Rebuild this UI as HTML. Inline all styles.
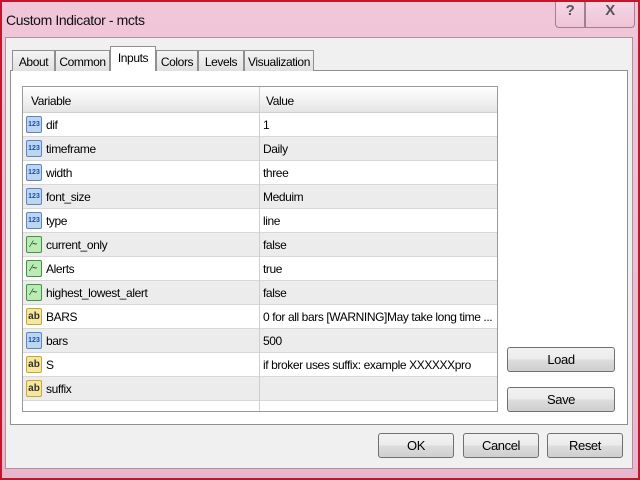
<!DOCTYPE html>
<html><head><style>
*{margin:0;padding:0;box-sizing:border-box}
body{width:640px;height:480px;overflow:hidden;background:#e8b4cc;font-family:"Liberation Sans",sans-serif;font-size:12px;letter-spacing:-0.4px;color:#000;position:relative}
.win{position:absolute;left:0;top:0;width:640px;height:480px;border:2px solid #c0182a;background:linear-gradient(#f0c6d8,#e9b7cd)}
.title{position:absolute;left:4px;top:10px;font-size:14px;color:#111}
.cap{position:absolute;top:0;height:26px;border:1px solid #a08090;border-top:none;background:linear-gradient(#f6d6e4,#eec4d6);text-align:center;font-size:15px;font-weight:bold;color:#555}
.client{position:absolute;left:5px;top:37px;width:628px;height:432px;background:#f0f0f0;border:1px solid #b090a0}
.panel{position:absolute;left:10px;top:70px;width:618px;height:355px;background:#fff;border:1px solid #8e8f8f}
.tab{position:absolute;top:50px;height:21px;border:1px solid #8e8f8f;border-bottom:none;background:linear-gradient(#f4f4f4,#e1e1e1);padding-top:4px;text-align:center;font-size:12px}
.tab.sel{top:46px;height:25px;background:#fff;padding-top:4px}
.grid{position:absolute;left:22px;top:86px;width:476px;height:326px;border:1px solid #9a9a9a;background:#fff;overflow:hidden}
.row{position:absolute;left:0;width:474px;height:24px;border-bottom:1px solid #d8d8d8}
.row.g{background:#ececec}
.row .a{position:absolute;left:23px;top:5px}
.row .b{position:absolute;left:240px;top:5px;width:232px;white-space:nowrap;overflow:hidden}
.div{position:absolute;left:236px;top:0;width:1px;height:324px;background:#cfcfcf}
.ic{position:absolute;left:3px;top:3px;width:16px;height:17px;border-radius:2px;font-size:7px;font-weight:bold;text-align:center;line-height:15px;letter-spacing:0}
.n{background:#bcd6f2;border:1px solid #5b86c4;color:#1f4fa0}
.bo{background:#bfe8b8;border:1px solid #3a9a3a;color:#1a6a1a;font-size:9px}
.s{background:#f5e7a0;border:1px solid #c9a830;color:#333;font-size:10px}
.btn{position:absolute;height:25px;border:1px solid #707070;border-radius:3px;background:linear-gradient(#f2f2f2 0,#ebebeb 50%,#dddddd 51%,#cfcfcf);text-align:center;line-height:23px;font-size:13px}
</style></head><body>
<div class="win">
<div class="title">Custom Indicator - mcts</div>
<div class="cap" style="left:553px;width:30px;border-radius:0 0 0 4px">?</div>
<div class="cap" style="left:583px;width:50px;border-radius:0 0 4px 0">X</div>
</div>
<div class="client"></div>
<div class="panel"></div>
<div class="tab" style="left:12px;width:43px">About</div>
<div class="tab" style="left:55px;width:55px">Common</div>
<div class="tab sel" style="left:110px;width:46px">Inputs</div>
<div class="tab" style="left:156px;width:42px">Colors</div>
<div class="tab" style="left:198px;width:46px">Levels</div>
<div class="tab" style="left:244px;width:70px">Visualization</div>
<div class="grid">
<div class="row" style="top:0;height:26px;background:linear-gradient(#fff,#f0f0f0 60%,#e4e4e4);border-bottom:1px solid #d0d0d0"><span style="position:absolute;left:8px;top:7px">Variable</span><span style="position:absolute;left:243px;top:7px">Value</span></div>
<div class="row" style="top:26px"><div class="ic n">123</div><span class="a">dif</span><span class="b">1</span></div>
<div class="row g" style="top:50px"><div class="ic n">123</div><span class="a">timeframe</span><span class="b">Daily</span></div>
<div class="row" style="top:74px"><div class="ic n">123</div><span class="a">width</span><span class="b">three</span></div>
<div class="row g" style="top:98px"><div class="ic n">123</div><span class="a">font_size</span><span class="b">Meduim</span></div>
<div class="row" style="top:122px"><div class="ic n">123</div><span class="a">type</span><span class="b">line</span></div>
<div class="row g" style="top:146px"><div class="ic bo">⁄~</div><span class="a">current_only</span><span class="b">false</span></div>
<div class="row" style="top:170px"><div class="ic bo">⁄~</div><span class="a">Alerts</span><span class="b">true</span></div>
<div class="row g" style="top:194px"><div class="ic bo">⁄~</div><span class="a">highest_lowest_alert</span><span class="b">false</span></div>
<div class="row" style="top:218px"><div class="ic s">ab</div><span class="a">BARS</span><span class="b">0 for all bars [WARNING]May take long time ...</span></div>
<div class="row g" style="top:242px"><div class="ic n">123</div><span class="a">bars</span><span class="b">500</span></div>
<div class="row" style="top:266px"><div class="ic s">ab</div><span class="a">S</span><span class="b">if broker uses suffix: example XXXXXXpro</span></div>
<div class="row g" style="top:290px"><div class="ic s">ab</div><span class="a">suffix</span><span class="b"></span></div>
<div class="div" style="top:0"></div>
</div>
<div class="btn" style="left:507px;top:347px;width:108px">Load</div>
<div class="btn" style="left:507px;top:387px;width:108px">Save</div>
<div class="btn" style="left:378px;top:433px;width:76px">OK</div>
<div class="btn" style="left:463px;top:433px;width:76px">Cancel</div>
<div class="btn" style="left:547px;top:433px;width:76px">Reset</div>
</body></html>
